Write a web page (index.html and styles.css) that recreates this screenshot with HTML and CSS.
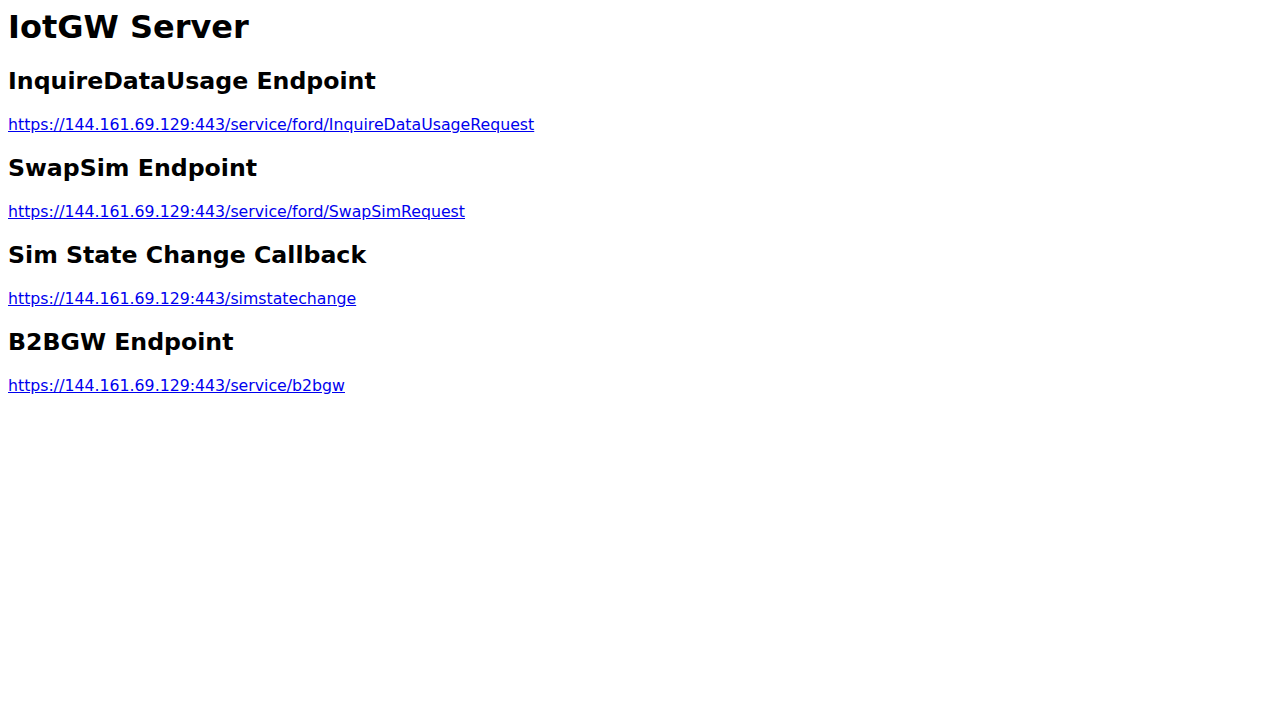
FILE: index.html
```html
<!DOCTYPE html>
<html>
<head>
<meta charset="utf-8">
<title>IotGW Server</title>
<link rel="stylesheet" href="styles.css">
</head>
<body class="page">
<h1 class="title">IotGW Server</h1>
<h2 class="section">InquireDataUsage Endpoint</h2>
<p class="endpoint"><a class="link" href="#">https://144.161.69.129:443/service/ford/InquireDataUsageRequest</a></p>
<h2 class="section">SwapSim Endpoint</h2>
<p class="endpoint"><a class="link" href="#">https://144.161.69.129:443/service/ford/SwapSimRequest</a></p>
<h2 class="section">Sim State Change Callback</h2>
<p class="endpoint"><a class="link" href="#">https://144.161.69.129:443/simstatechange</a></p>
<h2 class="section">B2BGW Endpoint</h2>
<p class="endpoint"><a class="link" href="#">https://144.161.69.129:443/service/b2bgw</a></p>
</body>
</html>
```

FILE: styles.css
```css
.page {
  margin: 8px;
  font-family: "DejaVu Sans", sans-serif;
  background: #fff;
  color: #000;
}
.title {
  font-size: 32px;
  font-weight: bold;
  margin: 0 0 21.44px;
}
.section {
  font-size: 23.65px;
  line-height: 28px;
  font-weight: bold;
  margin: 19.92px 0;
}
.endpoint {
  font-size: 15.75px;
  line-height: 19px;
  margin: 16px 0;
}
.link {
  color: #0000ee;
  text-decoration: underline;
}
```
